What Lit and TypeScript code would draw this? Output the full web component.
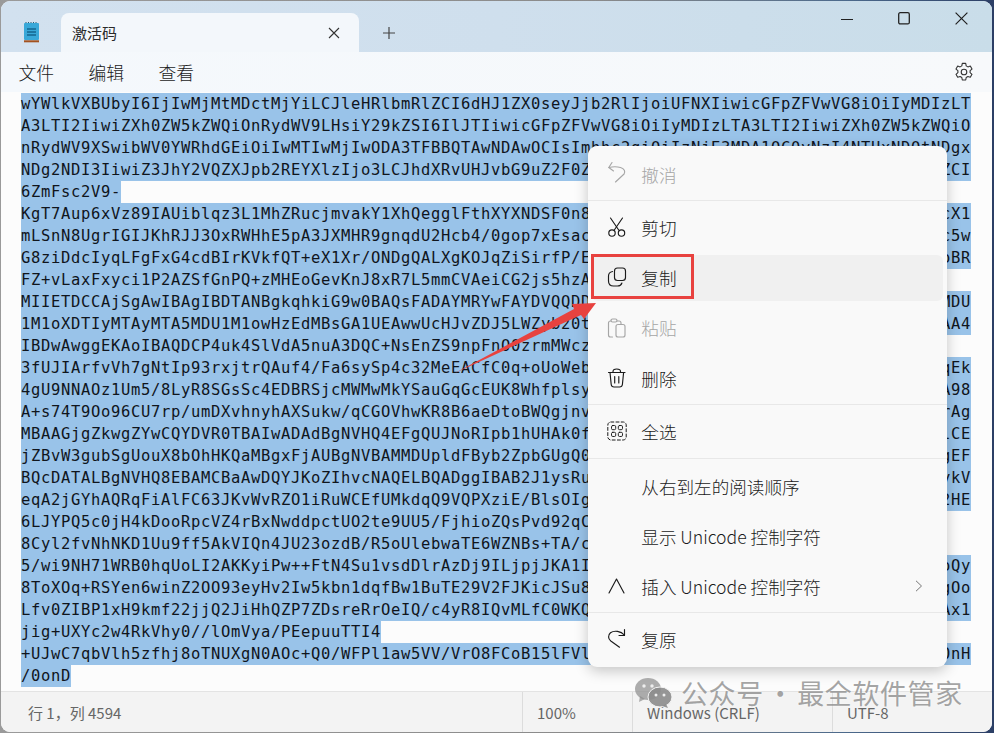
import { LitElement, html, css, svg } from "lit";
import { customElement } from "lit/decorators.js";

interface Line { a: string; b?: string; }

const LINES: Line[] = [
  { a: "wYWlkVXBUbyI6IjIwMjMtMDctMjYiLCJleHRlbmRlZCI6dHJ1ZX0seyJjb2RlIjoiUFNXIiwicGFpZFVwVG8iOiIyMDIzLT" },
  { a: "A3LTI2IiwiZXh0ZW5kZWQiOnRydWV9LHsiY29kZSI6IlJTIiwicGFpZFVwVG8iOiIyMDIzLTA3LTI2IiwiZXh0ZW5kZWQiO" },
  { a: "nRydWV9XSwibWV0YWRhdGEiOiIwMTIwMjIwODA3TFBBQTAwNDAwOCIsImhhc2giOiIzNjE3MDA1OC0yNzI4NTUxNDQtNDgx" },
  { a: "NDg2NDI3IiwiZ3JhY2VQZXJpb2REYXlzIjo3LCJhdXRvUHJvbG9uZ2F0Z", b: "ZCI" },
  { a: "6ZmFsc2V9-" },
  { a: "KgT7Aup6xVz89IAUiblqz3L1MhZRucjmvakY1XhQegglFthXYXNDSF0n8", b: "cX1" },
  { a: "mLSnN8UgrIGIJKhRJJ3OxRWHhE5pA3JXMHR9gnqdU2Hcb4/0gop7xEsac", b: "c5w" },
  { a: "G8ziDdcIyqLFgFxG4cdBIrKVkfQT+eX1Xr/ONDgQALXgKOJqZiSirfP/E", b: "oBR" },
  { a: "FZ+vLaxFxyci1P2AZSfGnPQ+zMHEoGevKnJ8xR7L5mmCVAeiCG2js5hzA" },
  { a: "MIIETDCCAjSgAwIBAgIBDTANBgkqhkiG9w0BAQsFADAYMRYwFAYDVQQDD", b: "MDU" },
  { a: "1M1oXDTIyMTAyMTA5MDU1M1owHzEdMBsGA1UEAwwUcHJvZDJ5LWZyb20t", b: "AA4" },
  { a: "IBDwAwggEKAoIBAQDCP4uk4SlVdA5nuA3DQC+NsEnZS9npFnO0zrmMWcz" },
  { a: "3fUJIArfvVh7gNtIp93rxjtrQAuf4/Fa6sySp4c32MeEACfC0q+oUoWeb", b: "qEk" },
  { a: "4gU9NNAOz1Um5/8LyR8SGsSc4EDBRSjcMWMwMkYSauGqGcEUK8Whfplsy", b: "A98" },
  { a: "A+s74T9Oo96CU7rp/umDXvhnyhAXSukw/qCGOVhwKR8B6aeDtoBWQgjnv", b: "rAg" },
  { a: "MBAAGjgZkwgZYwCQYDVR0TBAIwADAdBgNVHQ4EFgQUJNoRIpb1hUHAk0f", b: "lCE" },
  { a: "jZBvW3gubSgUouX8bOhHKQaMBgxFjAUBgNVBAMMDUpldFByb2ZpbGUgQ0", b: "gEF" },
  { a: "BQcDATALBgNVHQ8EBAMCBaAwDQYJKoZIhvcNAQELBQADggIBAB2J1ysRu", b: "ykV" },
  { a: "eqA2jGYhAQRqFiAlFC63JKvWvRZO1iRuWCEfUMkdqQ9VQPXziE/BlsOIg", b: "2HE" },
  { a: "6LJYPQ5c0jH4kDooRpcVZ4rBxNwddpctUO2te9UU5/FjhioZQsPvd92qC" },
  { a: "8Cyl2fvNhNKD1Uu9ff5AkVIQn4JU23ozdB/R5oUlebwaTE6WZNBs+TA/c" },
  { a: "5/wi9NH71WRB0hqUoLI2AKKyiPw++FtN4Su1vsdDlrAzDj9ILjpjJKA1I", b: "oQy" },
  { a: "8ToXOq+RSYen6winZ2OO93eyHv2Iw5kbn1dqfBw1BuTE29V2FJKicJSu8", b: "gOo" },
  { a: "Lfv0ZIBP1xH9kmf22jjQ2JiHhQZP7ZDsreRrOeIQ/c4yR8IQvMLfC0WKQ", b: "Ax1" },
  { a: "jig+UXYc2w4RkVhy0//lOmVya/PEepuuTTI4" },
  { a: "+UJwC7qbVlh5zfhj8oTNUXgN0AOc+Q0/WFPl1aw5VV/VrO8FCoB15lFVl", b: "0nH" },
  { a: "/0onD" },
];

const ic = (body: unknown) =>
  html`<svg class="ic" viewBox="0 0 20 20" width="20" height="20" fill="none" stroke="currentColor" stroke-width="1.15" stroke-linecap="round" stroke-linejoin="round">${body}</svg>`;

const ICONS: Record<string, unknown> = {
  undo: ic(svg`<path d="M5 -1.500 1.800 3.500 6.500 7"/><path d="M1.800 3.500C6 2.500 10 2.500 13.500 3.500c4 1.200 5 4 3.600 6.500L8.500 18"/>`),
  cut: ic(svg`<path d="M3.500 1 11.700 13"/><path d="M15.500 1 7.300 13"/><circle cx="5" cy="16" r="3.200"/><circle cx="14.500" cy="16" r="3.200"/>`),
  copy: ic(svg`<rect x="7.500" y="1" width="11" height="12.500" rx="3"/><path d="M5.500 4.500C3 5 1.500 6.500 1.500 9v5c0 3 2 5 5 5h4c2.300 0 3.800-1 4.400-3"/>`),
  paste: ic(svg`<rect x="4" y="1" width="6" height="3" rx="1.500"/><path d="M4 3H3.500C2.300 3 1.500 3.800 1.500 5v12c0 1.200.8 2 2 2h2"/><rect x="9" y="6.500" width="9" height="12.500" rx="2"/><path d="M10 3h2c1.200 0 2 .8 2 2v1.500"/>`),
  trash: ic(svg`<path d="M1.500 4.500h16.500"/><path d="M6 4.500V3.500C6 2 7.500 1 9.700 1s3.800 1 3.800 2.500v1"/><path d="M3 4.500l1.200 12c.2 1.600 1.200 2.500 2.800 2.500h5.600c1.600 0 2.600-.9 2.800-2.500l1.200-12"/><path d="M7.700 8.500v6.500M11.800 8.500v6.500"/>`),
  all: ic(svg`<rect x=".8" y="1" width="18.400" height="18" rx="3" stroke-dasharray="3 2.200" stroke-width="1"/><rect x="4.500" y="4.500" width="4.200" height="4.200" rx="1.300" stroke-width=".95"/><rect x="11.300" y="4.500" width="4.200" height="4.200" rx="1.300" stroke-width=".95"/><rect x="4.500" y="11.300" width="4.200" height="4.200" rx="1.300" stroke-width=".95"/><rect x="11.300" y="11.300" width="4.200" height="4.200" rx="1.300" stroke-width=".95"/>`),
  ins: ic(svg`<path d="M2 17 9.500 3 17 17"/>`),
  redo: ic(svg`<path d="M17.500 0.500V6.500H12"/><path d="M17.300 6C14 2 7 1.200 3.500 3.800.8 6 1 9.800 3.800 12l8.700 6.200"/>`),
};

interface Item { icon?: string; label: string; disabled?: boolean; hover?: boolean; chevron?: boolean; sep?: string; tall?: boolean; }

const MENU: Item[] = [
  { icon: "undo", label: "撤消", disabled: true, sep: "s1" },
  { icon: "cut", label: "剪切" },
  { icon: "copy", label: "复制", hover: true },
  { icon: "paste", label: "粘贴", disabled: true, tall: true },
  { icon: "trash", label: "删除", sep: "s1" },
  { icon: "all", label: "全选", sep: "s2" },
  { label: "从右到左的阅读顺序" },
  { label: "显示 Unicode 控制字符" },
  { icon: "ins", label: "插入 Unicode 控制字符", chevron: true, sep: "s1" },
  { icon: "redo", label: "复原" },
];

@customElement("app-root")
export class AppRoot extends LitElement {
  static styles = css`
    :host {
      display: block;
      position: relative;
      width: 994px;
      height: 733px;
      overflow: hidden;
      background: linear-gradient(90deg, #9a9a9a 0%, #8a8a8a 60%, #4c6a8c 85%, #2c3f66 100%);
      font-family: "Noto Sans CJK SC", "Noto Sans", sans-serif;
      color: #1b1b1b;
    }
    .win {
      height: 731px;
      margin: 1px 2px 1px 1px;
      border-radius: 9px;
      overflow: hidden;
      display: flex;
      flex-direction: column;
      background: #fcfcfc;
    }
    .title {
      height: 51px;
      flex: none;
      display: flex;
      align-items: flex-end;
      background: linear-gradient(90deg, #d2e1ef 0%, #cfdfed 50%, #c9dde9 100%);
    }
    .appicon { width: 60px; height: 51px; flex: none; display: flex; align-items: flex-start; padding: 20px 0 0 21px; box-sizing: border-box; }
    .tab {
      width: 298px;
      height: 39px;
      flex: none;
      border-radius: 8px 8px 0 0;
      background: #f3f7fb;
      display: flex;
      align-items: center;
      padding: 0 19px 0 11px;
      box-sizing: border-box;
      font-size: 15px;
      font-weight: 400;
      color: #2a2a2a;
    }
    .tab span { flex: 1; }
    .plus { width: 60px; height: 39px; display: flex; align-items: center; justify-content: center; color: #444; }
    .spacer { flex: 1; }
    .ctrl { display: flex; align-self: flex-start; padding-top: 11px; gap: 45px; padding-right: 24px; color: #222; }
    .ctrl svg { display: block; }
    .tools {
      height: 40px;
      flex: none;
      display: flex;
      align-items: center;
      background: linear-gradient(90deg, #f4f8fc, #f7f9fb);
      padding: 0 18px 0 17.500px;
      font-size: 17.800px;
      font-weight: 300;
    }
    .tools span { margin-right: 34.400px; }
    .tools svg { margin-left: auto; color: #333; }
    .editor {
      flex: 1;
      padding: 1px 0 0 20px;
      background: #fcfcfc;
      min-height: 0;
      overflow: hidden;
    }
    .l { height: 22px; display: flex; }
    .l.split { width: 950px; justify-content: space-between; background: #99c3e9; }
    .l span {
      display: block;
      height: 22px;
      line-height: 23px;
      white-space: pre;
      background: #99c3e9;
      color: #10151c;
      font-family: "DejaVu Sans Mono", monospace;
      font-size: 15.500px;
      letter-spacing: 0.668px;
    }
    .status {
      height: 40px;
      flex: none;
      border-top: 1px solid #e3e3e3;
      background: #f3f3f3;
      display: flex;
      align-items: center;
      font-size: 15px;
      color: #666;
      font-weight: 400;
    }
    .cell { height: 100%; display: flex; align-items: center; box-sizing: border-box; }
    .c1 { width: 521px; padding-left: 27px; }
    .c2 { width: 110px; }
    .c3 { width: 200px; }
    .c4 { flex: 1; }
    .cell + .cell { border-left: 1px solid #dcdcdc; padding-left: 14px; }
    .menu {
      position: absolute;
      left: 588px;
      top: 146px;
      width: 359px;
      height: 521px;
      box-sizing: border-box;
      padding: 4px 4px 2px;
      border-radius: 9px;
      background: #f9f9f9;
      box-shadow: 0 4px 14px rgba(0, 0, 0, 0.22);
      display: flex;
      flex-direction: column;
      font-weight: 300;
      font-size: 17.600px;
    }
    .it {
      height: 46px;
      margin: 2px 0;
      flex: none;
      box-sizing: border-box;
      display: flex;
      align-items: center;
      border-radius: 6px;
      padding: 0 20px 2px 15px;
      color: #1a1a1a;
    }
    .it.tall { height: 47px; }
    .it.hover { background: #f0f0f0; }
    .it.dis { color: #a6a6a6; }
    .it .icb { width: 20px; height: 20px; flex: none; margin-right: 14.300px; }
    .ic { display: block; overflow: visible; }
    .it .tx { flex: 1; white-space: pre; }
    .sep { height: 1px; margin: 0 -4px; background: #e8e8e8; flex: none; }
    .sep.s1 { margin-bottom: 2px; }
    .sep.s2 { margin-top: 1px; margin-bottom: 3px; }
    .red {
      position: absolute;
      left: 591px;
      top: 254px;
      width: 103px;
      height: 45px;
      box-sizing: border-box;
      border: 3px solid #e8423f;
    }
    .arrow { position: absolute; left: 450px; top: 298px; }
    .wm {
      position: absolute;
      left: 635px;
      top: 676px;
      display: flex;
      align-items: center;
      gap: 9px;
      color: rgba(130, 130, 130, 0.72);
      font-size: 27px;
      line-height: 34px;
      letter-spacing: 0.600px;
      word-spacing: -3.750px;
      white-space: pre;
      font-weight: 400;
      text-shadow: 0 0 3px rgba(255, 255, 255, 0.6);
    }
  `;

  render() {
    return html`
      <div class="win">
        <div class="title">
          <div class="appicon">
            <svg width="18" height="22" viewBox="0 0 18 22">
              <path d="M4 1v1.500M6.500 1v1.500M9 1v1.500M11.500 1v1.500M14 1v1.500" stroke="#2b5a70" stroke-width="1"/>
              <rect x="2" y="2" width="15" height="17" rx="1" fill="#39a8d8"/>
              <path d="M5 8h9M5 11h9M5 14h9" stroke="#14668f" stroke-width="1.400"/>
              <rect x="2" y="19.300" width="15" height="2" fill="#a3521f"/>
            </svg>
          </div>
          <div class="tab">
            <span>激活码</span>
            <svg width="12" height="12" viewBox="0 0 12 12" stroke="#333" stroke-width="1.100"><path d="M1 1l10 10M11 1 1 11"/></svg>
          </div>
          <div class="plus">
            <svg width="14" height="14" viewBox="0 0 14 14" stroke="#444" stroke-width="1.200"><path d="M7 1v12M1 7h12"/></svg>
          </div>
          <div class="spacer"></div>
          <div class="ctrl">
            <svg width="12" height="14" viewBox="0 0 12 14" stroke="#222" stroke-width="1.100"><path d="M0 7.500h12"/></svg>
            <svg width="12" height="13" viewBox="0 0 12 13" fill="none" stroke="#222" stroke-width="1.300"><rect x=".7" y=".7" width="10.600" height="11.200" rx="1.500"/></svg>
            <svg width="13" height="13" viewBox="0 0 13 13" stroke="#222" stroke-width="1.200"><path d="M.6.6l11.800 11.800M12.400.6.6 12.400"/></svg>
          </div>
        </div>
        <div class="tools">
          <span>文件</span><span>编辑</span><span>查看</span>
          <svg width="20" height="20" viewBox="0 0 20 20" fill="none" stroke="currentColor" stroke-width="1.100" stroke-linejoin="round">
            <circle cx="10" cy="10" r="2.800"/>
            <path d="M8.300 1.400h3.400l.5 2.500 1.700 1 2.400-.8 1.700 3-1.900 1.600v2l1.900 1.600-1.700 3-2.400-.8-1.700 1-.5 2.500H8.300l-.5-2.500-1.700-1-2.400.8-1.700-3 1.900-1.600v-2L2 7.100l1.700-3 2.400.8 1.700-1z"/>
          </svg>
        </div>
        <div class="editor">
          ${LINES.map((t) =>
            t.b
              ? html`<div class="l split"><span>${t.a}</span><span>${t.b}</span></div>`
              : html`<div class="l"><span>${t.a}</span></div>`
          )}
        </div>
        <div class="status">
          <div class="cell c1">行 1，列 4594</div>
          <div class="cell c2">100%</div>
          <div class="cell c3">Windows (CRLF)</div>
          <div class="cell c4">UTF-8</div>
        </div>
      </div>
      <div class="menu">
        ${MENU.map(
          (m) => html`
            <div class="it ${m.hover ? "hover" : ""} ${m.disabled ? "dis" : ""} ${m.tall ? "tall" : ""}">
              <div class="icb">${m.icon ? ICONS[m.icon] : ""}</div>
              <div class="tx">${m.label}</div>
              ${m.chevron
                ? html`<svg width="8" height="12" viewBox="0 0 8 12" fill="none" stroke="#777" stroke-width="1"><path d="M1 .8 6.500 6 1 11.200"/></svg>`
                : ""}
            </div>
            ${m.sep ? html`<div class="sep ${m.sep}"></div>` : ""}
          `
        )}
      </div>
      <svg class="arrow" width="150" height="80" viewBox="450 298 150 80">
        <polygon points="455,373 574,309 572,304 596,303 584,319 581,315" fill="#e8423f"/>
      </svg>
      <div class="red"></div>
      <div class="wm">
        <svg width="37" height="30" viewBox="0 0 37 30">
          <ellipse cx="13" cy="11" rx="13" ry="11" fill="rgba(140,140,140,.7)"/>
          <path d="M5 18l-1 6 6-3z" fill="rgba(140,140,140,.7)"/>
          <ellipse cx="25" cy="19" rx="12" ry="10" fill="rgba(140,140,140,.9)" stroke="#f4f4f4" stroke-width="1"/>
          <path d="M31 26l2 4-6-2z" fill="rgba(140,140,140,.9)"/>
          <circle cx="9" cy="8" r="1.700" fill="#eee"/><circle cx="17" cy="8" r="1.700" fill="#eee"/>
          <circle cx="21" cy="17" r="1.500" fill="#eee"/><circle cx="29" cy="17" r="1.500" fill="#eee"/>
        </svg>
        <span>公众号 · 最全软件管家</span>
      </div>
    `;
  }
}
